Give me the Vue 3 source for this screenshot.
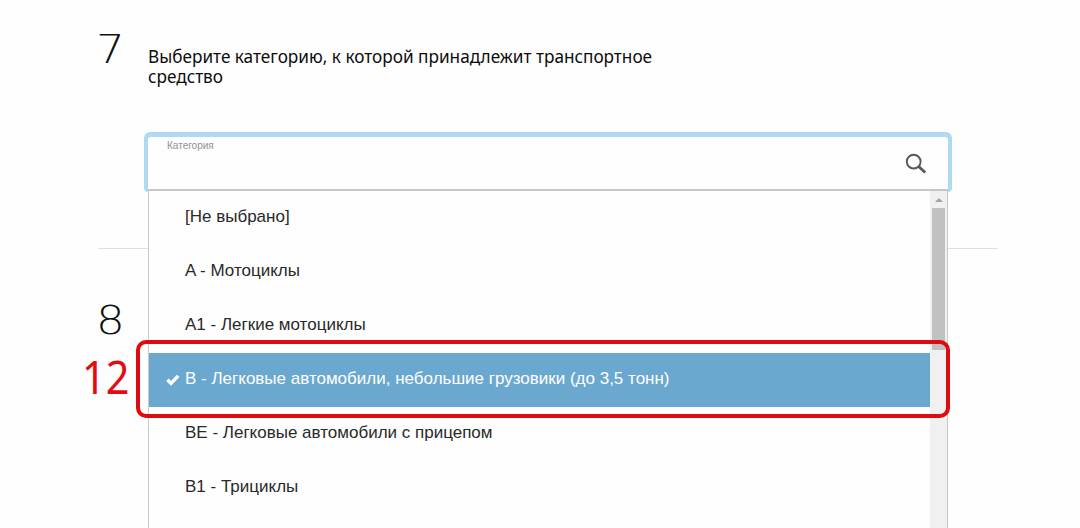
<template>
  <div class="page">
    <section class="step step-category">
      <div class="number">7</div>
      <div class="content">
        <h2 class="title">Выберите категорию, к которой принадлежит транспортное средство</h2>
        <div class="select">
          <div class="field">
            <span class="label">Категория</span>
            <svg class="search" width="22" height="22" viewBox="0 0 22 22">
              <circle cx="8.7" cy="8.6" r="6.9" fill="none" stroke="#5c5654" stroke-width="1.9" />
              <path d="M13.6 13.4L20.2 19.6" stroke="#5c5654" stroke-width="2.8" />
            </svg>
          </div>
          <div class="dropdown">
            <ul class="options">
              <li v-for="option in options" :key="option" class="option" :class="{ selected: option === selected }">
                <svg v-if="option === selected" class="check" width="14" height="12" viewBox="0 0 14 12">
                  <path d="M1.4 5.8L5 9.4L12.2 1.8" fill="none" stroke="#fff" stroke-width="3.4" />
                </svg>
                <span class="option-text">{{ option }}</span>
              </li>
            </ul>
            <div class="scrollbar">
              <div class="arrow"></div>
              <div class="thumb"></div>
            </div>
          </div>
        </div>
      </div>
    </section>
    <section class="step step-next">
      <div class="number">8</div>
    </section>
    <div class="marker">12</div>
    <div class="highlight"></div>
  </div>
</template>

<script setup>
import { ref } from 'vue'

const options = [
  '[Не выбрано]',
  'A - Мотоциклы',
  'A1 - Легкие мотоциклы',
  'B - Легковые автомобили, небольшие грузовики (до 3,5 тонн)',
  'BE - Легковые автомобили с прицепом',
  'B1 - Трициклы',
]

const selected = ref(options[3])
</script>

<style>
body {
  background: #fefefe;
  overflow: hidden;
}
</style>

<style scoped>
.page {
  position: relative;
  height: 528px;
  padding-left: 98px;
  box-sizing: border-box;
  overflow: hidden;
  font-family: "Liberation Sans", Arial, sans-serif;
}

.step {
  display: grid;
  grid-template-columns: 50px 1fr;
  width: 900px;
}

.step-category {
  height: 249px;
  box-sizing: border-box;
  border-bottom: 1px solid #dfdfdf;
}

.number {
  margin-left: -2px;
  padding-top: 25px;
  font: 200 39px/50px "DejaVu Sans", sans-serif;
  color: #111;
  transform: scaleX(1.16);
  transform-origin: 0 0;
}

.content {
  padding-top: 47px;
}

.title {
  width: 540px;
  margin: 0;
  height: 90px;
  font: 400 17.2px/20px "Noto Sans", sans-serif;
  color: #0c0c0c;
}

.select {
  position: relative;
  z-index: 1;
  width: 800px;
}

.field {
  position: relative;
  display: flex;
  justify-content: space-between;
  height: 54px;
  box-sizing: border-box;
  padding: 3px 21px 0 19px;
  border-bottom: 2px solid #c6c6c6;
  border-radius: 3px 3px 0 0;
  background: #fefefe;
}

/* focus ring, open at the bottom where the list starts */
.field::before {
  content: "";
  position: absolute;
  z-index: -1;
  inset: -5px -4px -3px;
  border-radius: 6px 6px 4px 4px;
  background: #b0daf4;
}

.label {
  font-size: 10px;
  line-height: 11px;
  color: #929292;
}

.search {
  margin-top: 13px;
}

.dropdown {
  display: flex;
  height: 337px;
  border: solid #c9c9c9;
  border-width: 0 1px;
  background: #fefefe;
}

.options {
  flex: 1;
  margin: 0;
  padding: 0;
  list-style: none;
}

.option {
  display: flex;
  height: 54px;
  padding-left: 36px;
  box-sizing: border-box;
  font-size: 17px;
  line-height: 51px;
  color: #292929;
}

.selected {
  padding-left: 17px;
  background: #6ba8d0;
  color: #fff;
}

.check {
  margin: 21px 5px 0 0;
}

.scrollbar {
  width: 17px;
  background: #f0f0f1;
}

.arrow {
  width: 0;
  margin: 7px auto 6px;
  border: 4px solid transparent;
  border-top: 0;
  border-bottom-color: #a3a3a3;
}

.thumb {
  width: 13px;
  height: 142px;
  margin: 0 auto;
  background: #c1c1c1;
}

.step-next .number {
  padding-top: 47px;
}

.marker {
  position: absolute;
  left: 82px;
  top: 347px;
  font: 400 45px/60px "Noto Sans", sans-serif;
  color: #e40b10;
  transform: scaleX(0.92);
  transform-origin: 0 0;
}

.highlight {
  position: absolute;
  z-index: 2;
  left: 136px;
  top: 340px;
  width: 814px;
  height: 78px;
  box-sizing: border-box;
  border: 4px solid #df0b0f;
  border-radius: 10px;
}
</style>
